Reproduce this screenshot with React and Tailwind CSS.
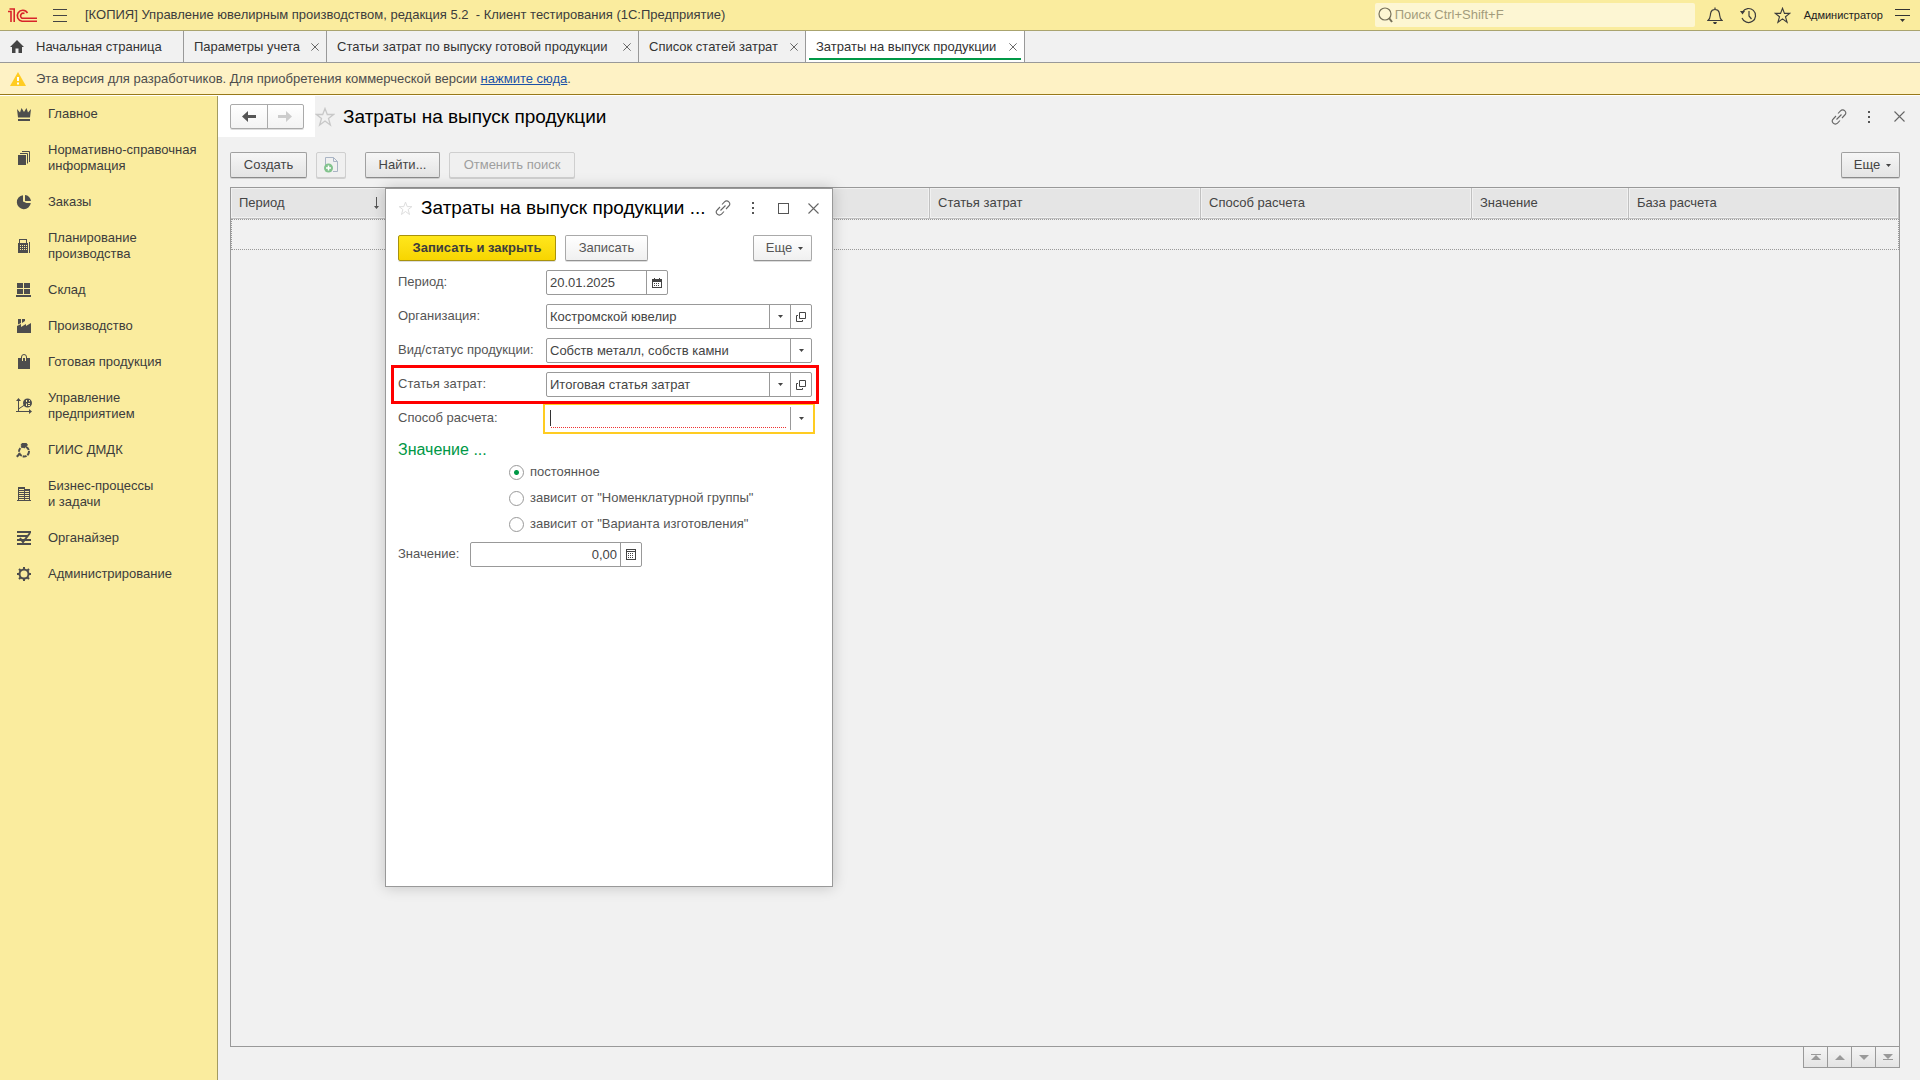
import { useState } from 'react';

const NAV_ITEMS = [
  { icon: 'crown', lines: ['Главное'] },
  { icon: 'books', lines: ['Нормативно-справочная', 'информация'] },
  { icon: 'pie', lines: ['Заказы'] },
  { icon: 'calc', lines: ['Планирование', 'производства'] },
  { icon: 'pallet', lines: ['Склад'] },
  { icon: 'factory', lines: ['Производство'] },
  { icon: 'bag', lines: ['Готовая продукция'] },
  { icon: 'chart', lines: ['Управление', 'предприятием'] },
  { icon: 'ring', lines: ['ГИИС ДМДК'] },
  { icon: 'building', lines: ['Бизнес-процессы', 'и задачи'] },
  { icon: 'organizer', lines: ['Органайзер'] },
  { icon: 'gear', lines: ['Администрирование'] },
];

const TABS = [
  { title: 'Параметры учета', width: 'w-[143px]' },
  { title: 'Статьи затрат по выпуску готовой продукции', width: 'w-[312px]' },
  { title: 'Список статей затрат', width: 'w-[167px]' },
  { title: 'Затраты на выпуск продукции', width: 'w-[219px]', active: true },
];

const RADIOS = [
  { value: 'const', label: 'постоянное' },
  { value: 'group', label: 'зависит от "Номенклатурной группы"' },
  { value: 'variant', label: 'зависит от "Варианта изготовления"' },
];

function NavIcon({ name }) {
  return (
    <svg width="16" height="16" viewBox="0 0 16 16" fill="#4d4d4d" className="shrink-0">
      {name === 'crown' && (
        <>
          <path d="M1 3l3 3.500L5.500 2 8 6l2.500-4L12 6.500 15 3l-1 8.500H2z" />
          <path d="M2 13h12v2H2z" />
        </>
      )}
      {name === 'books' && (
        <>
          <path d="M2 5h8v10H2z" />
          <path d="M4 3.500h7.500v10M6 1.500h7.500v10.500" fill="none" stroke="#4d4d4d" />
        </>
      )}
      {name === 'pie' && (
        <>
          <path d="M7 1.200A7 7 0 1 0 14.800 9L10.500 9 7 7.500z" />
          <path d="M9 1a6.500 6.500 0 0 1 6 6H9z" />
        </>
      )}
      {name === 'calc' && (
        <>
          <path fillRule="evenodd" d="M3 1h8v4h1v10H2V5h1zM4 2v3h6V2zM4 7v1h1V7zm2 0v1h1V7zm2 0v1h1V7zM4 9v1h1V9zm2 0v1h1V9zm2 0v1h1V9zm-4 2v1h1v-1zm2 0v1h1v-1zm2 0v1h1v-1zm2-4v1h1V7zm0 2v1h1V9zm0 2v1h1v-1z" />
          <path d="M13 4h1v11h-1z" />
        </>
      )}
      {name === 'pallet' && (
        <path d="M1 1h6v5H1zM8 1h6v5H8zM1 7h6v5H1zM8 7h6v5H8zM0 13h15v2H0z" />
      )}
      {name === 'factory' && (
        <>
          <path d="M1 15V8l4-2v3l5-3v2l5-3v10z" />
          <path d="M2 1h3v4L2 6.500zM6 1h3v2L6 5z" />
        </>
      )}
      {name === 'bag' && (
        <>
          <path d="M2 4h12v11H2z" />
          <path d="M5.500 7V4" stroke="#faec9e" strokeWidth="1" transform="translate(1 0)" />
          <path d="M10.500 7V4" stroke="#faec9e" strokeWidth="1" transform="translate(-1 0)" />
          <path d="M5.500 6V3a2.500 2.500 0 0 1 5 0v3" fill="none" stroke="#4d4d4d" />
        </>
      )}
      {name === 'chart' && (
        <>
          <path d="M2.500 2v11.500H14M2.500 11l6-4" fill="none" stroke="#4d4d4d" />
          <path d="M2.500 0L5 3H0zM16 13.500L13 11v5zM0 13h3v1H0z" />
          <path fillRule="evenodd" d="M11.500.5a4.500 4.500 0 1 1 0 9 4.500 4.500 0 0 1 0-9zM10 2v2h1V2zm3 0v1.500h1V2zm-3 3.500V8h1V5.500zm2-.5v1h2V5zm0 2v1h2V7z" />
        </>
      )}
      {name === 'ring' && (
        <>
          <circle cx="8" cy="9.500" r="5" fill="none" stroke="#4d4d4d" strokeWidth="2" strokeDasharray="4 1" />
          <path d="M6 1h4.500L12 3 8.200 6.500 4.500 3zM0 14l3-3 1.500 1.500-3 3z" />
        </>
      )}
      {name === 'building' && (
        <path fillRule="evenodd" d="M2 1h7v2h5v11h1v1H1v-1h1zm1 2v1h5V3zm0 2v1h5V5zm0 2v1h5V7zm0 2v1h5V9zm0 2v1h5v-1zm0 2v1h5v-1zm6-8v1h4V5zm0 2v1h4V7zm0 2v1h4V9zm0 2v1h4v-1zm0 2v1h4v-1z" />
      )}
      {name === 'organizer' && (
        <>
          <path d="M1 1h14v2H1zM1 5h10v2H1zM1 9h14v2H1zM1 13h14v2H1z" />
          <path d="M4 8l3 4 7-9" fill="none" stroke="#4d4d4d" strokeWidth="2" />
        </>
      )}
      {name === 'gear' && (
        <>
          <circle cx="8" cy="8" r="4.500" fill="none" stroke="#4d4d4d" strokeWidth="2" />
          <path
            d="M8 1v3M8 12v3M1 8h3M12 8h3M3 3l2 2M11 11l2 2M13 3l-2 2M5 11l-2 2"
            stroke="#4d4d4d"
            strokeWidth="2"
          />
        </>
      )}
    </svg>
  );
}

function StarIcon({ size = 18, color = '#c8c8c8' }) {
  return (
    <svg width={size} height={size} viewBox="0 0 20 20" fill="none" stroke={color} strokeWidth="1.300">
      <path d="M10 1.500l2.300 6h6.200l-5 3.900 1.900 6.600-5.400-4-5.400 4 1.900-6.600-5-3.900h6.200z" />
    </svg>
  );
}

function LinkIcon() {
  return (
    <svg width="16" height="16" viewBox="0 0 16 16" fill="none" stroke="#666" strokeWidth="1.100">
      <path d="M7 4.500l2.500-2.700a3 3 0 0 1 4.300 0 3 3 0 0 1 0 4.200L11 9M9 11.500l-2.500 2.700a3 3 0 0 1-4.300 0 3 3 0 0 1 0-4.200L5 7M5.500 10.500l5-5" />
    </svg>
  );
}

function DotsIcon() {
  return (
    <svg width="4" height="12" viewBox="0 0 4 12" fill="#555">
      <path d="M1 0h2v2H1zM1 5h2v2H1zM1 10h2v2H1z" />
    </svg>
  );
}

function CloseIcon({ size = 11, color = '#666' }) {
  return (
    <svg width={size} height={size} viewBox="0 0 11 11" fill="none" stroke={color} strokeWidth="1.100">
      <path d="M.5.5l10 10M10.500.5l-10 10" />
    </svg>
  );
}

function Caret() {
  return (
    <svg width="5" height="3" viewBox="0 0 5 3" fill="#444" className="shrink-0">
      <path d="M0 0h5L2.500 3z" />
    </svg>
  );
}

function OpenIcon() {
  return (
    <svg width="10" height="10" viewBox="0 0 10 10" fill="none" stroke="#444">
      <path d="M3.500.5h6v6h-6zM2 3.500H.5v6h6V8" />
    </svg>
  );
}

function ToolIcon({ label, children }) {
  return (
    <button type="button" aria-label={label} className="flex h-6 w-[30px] items-center justify-center">
      {children}
    </button>
  );
}

function Button({ children, tone = 'gray', disabled, className = '', ...rest }) {
  const tones = {
    gray: 'border-[#a0a0a0] border-b-[#8a8a8a] bg-linear-to-b from-[#f6f6f6] to-[#e4e4e4] text-[#444]',
    white: 'border-[#a9a9a9] border-b-[#939393] bg-linear-to-b from-white to-[#f0f0f0] text-[#555]',
    yellow: 'border-[#a8920c] bg-linear-to-b from-[#ffe71b] to-[#f7d500] font-bold text-[#3c3c3c]',
    off: 'border-[#cfcfcf] bg-[#f0f0f0] text-[#9e9e9e]',
  };
  return (
    <button
      type="button"
      disabled={disabled}
      className={`flex h-[26px] items-center justify-center rounded-xs border shadow-[0_1px_0_#0002] ${disabled ? tones.off : tones[tone]} ${className}`}
      {...rest}
    >
      {children}
    </button>
  );
}

function TopBar() {
  return (
    <header className="flex h-[31px] items-center border-b border-[#aaa46f] bg-[#faec9e] pr-2.5 pl-2">
      <svg width="29" height="16" viewBox="0 0 29 16" fill="none" stroke="#d8232a" strokeWidth="1.600">
        <path d="M0 4.500h3v10.500M1.500 2h4.700v13" />
        <path d="M19.500 6a5.500 5.500 0 1 0-5.500 8.200h15M16.500 6.500a2.600 2.600 0 1 0-2.500 4.700h15" />
      </svg>
      <button type="button" aria-label="Меню" className="ml-4 flex h-6 w-3.5 items-center">
        <svg width="14" height="13" viewBox="0 0 14 13" stroke="#444">
          <path d="M0 .5h14M0 6.500h14M0 12.500h14" />
        </svg>
      </button>
      <h1 className="ml-[18px] text-[13px] whitespace-pre text-[#3c3c3c]">
        [КОПИЯ] Управление ювелирным производством, редакция 5.2{'  '}- Клиент тестирования (1С:Предприятие)
      </h1>
      <label className="ml-auto flex h-6 w-80 items-center gap-0.5 rounded-xs bg-[#fdf6d3] pl-[3px]">
        <svg width="15" height="16" viewBox="0 0 15 16" fill="none" stroke="#77715a" strokeWidth="1.200">
          <circle cx="7" cy="7" r="6" />
          <path d="M11 11l3 4" strokeWidth="2" />
        </svg>
        <input
          type="search"
          aria-label="Поиск"
          placeholder="Поиск Ctrl+Shift+F"
          className="min-w-0 flex-1 bg-transparent text-[13px] outline-none placeholder:text-[#a39c7c]"
        />
      </label>
      <div className="ml-[3px] flex items-center">
        <button type="button" aria-label="Уведомления" className="flex w-[34px] justify-center">
          <svg width="16" height="17" viewBox="0 0 16 17" fill="none" stroke="#3c3c3c" strokeWidth="1.200">
            <path d="M1 13.500C4 11 3 8 3.800 5.500 4.300 3.500 6 2.500 8 2.500s3.700 1 4.200 3c.8 2.500-.2 5.500 2.800 8zM8 2.500V.5" />
            <path d="M6 15h4l-1 2H7z" fill="#3c3c3c" stroke="none" />
          </svg>
        </button>
        <button type="button" aria-label="История" className="flex w-[34px] justify-center">
          <svg width="17" height="17" viewBox="0 0 17 17" fill="none" stroke="#3c3c3c" strokeWidth="1.200">
            <path d="M2.500 5a7 7 0 1 1-.5 6M9 4v5l2.500 3" />
            <path d="M0 4h5L2.500 7.500z" fill="#3c3c3c" stroke="none" />
          </svg>
        </button>
        <button type="button" aria-label="Избранное" className="flex w-[34px] justify-center">
          <StarIcon size={17} color="#3c3c3c" />
        </button>
      </div>
      <a href="#user" className="ml-1 text-[11px] text-[#222]">
        Администратор
      </a>
      <button type="button" aria-label="Настройки" className="ml-3">
        <svg width="15" height="13" viewBox="0 0 15 13" stroke="#333" fill="#333">
          <path d="M0 .5h15M0 6.500h15" />
          <path d="M5 10h5l-2.500 3z" stroke="none" />
        </svg>
      </button>
    </header>
  );
}

function TabBar() {
  return (
    <nav className="flex h-8 border-b border-[#999] bg-[#f1f1f1] text-[#333]">
      <a href="#home" className="flex w-[184px] items-center gap-3 border-r border-[#999] pl-2.5">
        <svg width="14" height="13" viewBox="0 0 14 13" fill="#444">
          <path d="M7 0l7 7h-2v6H8.500V8.500h-3V13H2V7H0z" />
        </svg>
        Начальная страница
      </a>
      {TABS.map((tab) => (
        <div
          key={tab.title}
          className={`flex border-r border-[#999] px-[3px] pb-0.5 ${tab.width} ${tab.active ? 'bg-white' : ''}`}
        >
          <div
            className={`flex flex-1 items-center justify-between border-b-2 pt-1 pr-1 pl-[7px] ${tab.active ? 'border-[#009846]' : 'border-transparent'}`}
          >
            <a href="#tab">{tab.title}</a>
            <button type="button" aria-label="Закрыть вкладку">
              <CloseIcon size={8} color="#444" />
            </button>
          </div>
        </div>
      ))}
    </nav>
  );
}

function Notice() {
  return (
    <div className="flex h-8 items-center gap-2.5 border-b border-[#98791a] bg-[#fef2c5] pl-2.5 text-[#4d4d4d]">
      <svg width="16" height="14" viewBox="0 0 16 14">
        <path d="M8 0l8 14H0z" fill="#fc2" />
        <path d="M7 5h2v4H7zM7 10.500h2v2H7z" fill="#fff" />
      </svg>
      <p>
        Эта версия для разработчиков. Для приобретения коммерческой версии{' '}
        <a href="#buy" className="text-[#1a51a8] underline">
          нажмите сюда
        </a>
        .
      </p>
    </div>
  );
}

function Sidebar() {
  return (
    <aside className="w-[218px] shrink-0 border-r border-[#a39b60] bg-[#faec9e]">
      <ul>
        {NAV_ITEMS.map((item) => (
          <li key={item.icon}>
            <a href={`#${item.icon}`} className="flex items-center gap-4 py-2.5 pl-4 leading-4 text-[#3c3c3c]">
              <NavIcon name={item.icon} />
              <span>
                {item.lines.map((line) => (
                  <span key={line} className="block">
                    {line}
                  </span>
                ))}
              </span>
            </a>
          </li>
        ))}
      </ul>
    </aside>
  );
}

function FieldButton({ label, children }) {
  return (
    <button
      type="button"
      aria-label={label}
      className="flex w-[21px] shrink-0 items-center justify-center border-l border-[#999]"
    >
      {children}
    </button>
  );
}

function Row({ id, label, highlight, children }) {
  return (
    <div className="relative flex h-[25px]">
      {highlight && (
        <span className="pointer-events-none absolute -inset-[7px] z-10 border-3 border-[#ff0000]" />
      )}
      <label htmlFor={id} className="w-[148px] shrink-0 pt-1 whitespace-nowrap">
        {label}
      </label>
      {children}
    </div>
  );
}

const FIELD = 'flex h-[25px] rounded-xs border border-[#999] bg-white text-[#444]';
const INPUT = 'min-w-0 flex-1 bg-transparent px-[3px] outline-none';

function CostDialog() {
  const [mode, setMode] = useState('const');
  const [kind, setKind] = useState('own');

  return (
    <section
      role="dialog"
      aria-label="Затраты на выпуск продукции"
      className="absolute top-[92px] left-[167px] h-[699px] w-[448px] border border-[#999] bg-white px-3 text-[#555] shadow-[0_0_14px_#0003]"
    >
      <div className="flex h-[38px] items-center">
        <StarIcon size={15} color="#dcdcdc" />
        <h2 className="ml-2 flex-1 text-[19px] whitespace-nowrap text-black">Затраты на выпуск продукции ...</h2>
        <div className="-mr-2 -ml-2 flex items-center">
          <ToolIcon label="Ссылка">
            <LinkIcon />
          </ToolIcon>
          <ToolIcon label="Еще действия">
            <DotsIcon />
          </ToolIcon>
          <ToolIcon label="Развернуть">
            <span className="size-[11px] border border-[#555]" />
          </ToolIcon>
          <ToolIcon label="Закрыть">
            <CloseIcon />
          </ToolIcon>
        </div>
      </div>

      <div className="mt-2 flex gap-[9px] pr-2">
        <Button tone="yellow" className="w-[158px]">
          Записать и закрыть
        </Button>
        <Button tone="white" className="w-[83px]">
          Записать
        </Button>
        <Button tone="white" className="ml-auto w-[59px] gap-1.5 pl-1">
          Еще <Caret />
        </Button>
      </div>

      <form className="mt-[9px] pr-2">
        <div className="flex flex-col gap-[9px]">
          <Row id="period" label="Период:">
            <div className={`${FIELD} w-[122px]`}>
              <input id="period" defaultValue="20.01.2025" className={INPUT} />
              <FieldButton label="Выбрать дату">
                <svg width="10" height="10" viewBox="0 0 10 10" fill="#444">
                  <path fillRule="evenodd" d="M0 1h2V0h1v1h4V0h1v1h2v9H0zm1 3v5h8V4z" />
                  <path d="M2 5h1v1H2zM4 5h1v1H4zM6 5h1v1H6zM2 7h1v1H2zM4 7h1v1H4zM6 7h1v1H6z" />
                </svg>
              </FieldButton>
            </div>
          </Row>
          <Row id="org" label="Организация:">
            <div className={`${FIELD} flex-1`}>
              <input id="org" defaultValue="Костромской ювелир" className={INPUT} />
              <FieldButton label="Выбрать">
                <Caret />
              </FieldButton>
              <FieldButton label="Открыть">
                <OpenIcon />
              </FieldButton>
            </div>
          </Row>
          <Row id="kind" label="Вид/статус продукции:">
            <div className={`${FIELD} relative flex-1`}>
              <select
                id="kind"
                value={kind}
                onChange={(e) => setKind(e.target.value)}
                className="w-full appearance-none bg-transparent px-[3px] outline-none"
              >
                <option value="own">Собств металл, собств камни</option>
              </select>
              <span className="pointer-events-none absolute inset-y-0 right-0 flex w-[21px] items-center justify-center border-l border-[#999]">
                <Caret />
              </span>
            </div>
          </Row>
          <Row id="cost" label="Статья затрат:" highlight>
            <div className={`${FIELD} flex-1`}>
              <input id="cost" defaultValue="Итоговая статья затрат" className={INPUT} />
              <FieldButton label="Выбрать">
                <Caret />
              </FieldButton>
              <FieldButton label="Открыть">
                <OpenIcon />
              </FieldButton>
            </div>
          </Row>
          <Row id="method" label="Способ расчета:">
            <div className="relative -mx-[3px] -my-[3px] flex flex-1 border-2 border-[#fc2] bg-white p-0.5">
              <span className="pointer-events-none absolute top-[5px] left-[5px] h-4 w-px bg-[#333]" />
              <div className="flex flex-1 px-1">
                <input
                  id="method"
                  className="mb-0.5 min-w-0 flex-1 border-b border-dotted border-[#e33] bg-transparent caret-transparent outline-none"
                />
              </div>
              <FieldButton label="Выбрать">
                <Caret />
              </FieldButton>
            </div>
          </Row>
        </div>

        <fieldset className="mt-[11px]">
          <legend className="text-[16px] leading-4 text-[#009846]">Значение ...</legend>
          <div className="flex flex-col pt-px pl-[111px]">
            {RADIOS.map((r) => (
              <label key={r.value} className="flex h-[26px] items-center gap-1.5">
                <input
                  type="radio"
                  name="mode"
                  value={r.value}
                  checked={mode === r.value}
                  onChange={() => setMode(r.value)}
                  className="size-[15px] appearance-none rounded-full border border-[#999] bg-white checked:bg-[radial-gradient(circle,#009846_2px,#fff_3px)]"
                />
                {r.label}
              </label>
            ))}
          </div>
        </fieldset>

        <div className="mt-[5px] flex">
          <label htmlFor="value" className="w-[72px] pt-1">
            Значение:
          </label>
          <div className={`${FIELD} w-[172px]`}>
            <input id="value" defaultValue="0,00" className={`${INPUT} text-right`} />
            <FieldButton label="Калькулятор">
              <svg width="10" height="11" viewBox="0 0 10 11" fill="#444">
                <path fillRule="evenodd" d="M0 0h10v11H0zm1 1v1h8V1zm0 2v7h8V3z" />
                <path d="M2 4h1v1H2zM4 4h1v1H4zM6 4h1v1H6zM2 6h1v1H2zM4 6h1v1H4zM6 6h1v1H6zM2 8h1v1H2zM4 8h1v1H4zM6 8h1v1H6z" />
              </svg>
            </FieldButton>
          </div>
        </div>
      </form>
    </section>
  );
}

function CostTable() {
  const head = 'border-r border-b border-[#c0c0c0] pl-2 text-left font-normal shadow-[inset_0_0_0_1px_#f1f1f1]';
  return (
    <div className="flex flex-1 flex-col border border-[#999]">
      <table className="w-full table-fixed border-separate border-spacing-0">
        <colgroup>
          <col className="w-[156px]" />
          <col className="w-[543px]" />
          <col className="w-[271px]" />
          <col className="w-[271px]" />
          <col className="w-[157px]" />
          <col />
        </colgroup>
        <thead className="bg-[#e5e5e5] text-[#444]">
          <tr className="h-[31px]">
            <th className={head}>
              <span className="flex items-center justify-between pr-[7px]">
                Период
                <svg width="5" height="12" viewBox="0 0 5 12" fill="#555">
                  <path d="M2 0h1v9h2l-2.500 3L0 9h2z" />
                </svg>
              </span>
            </th>
            <th className={head} aria-label="Продукция" />
            <th className={head}>Статья затрат</th>
            <th className={head}>Способ расчета</th>
            <th className={head}>Значение</th>
            <th className={head}>База расчета</th>
          </tr>
        </thead>
        <tbody>
          <tr className="h-[31px]">
            <td colSpan={6} className="border border-dotted border-[#999]" />
          </tr>
        </tbody>
      </table>
    </div>
  );
}

function Pager() {
  const buttons = [
    { label: 'В начало', d: 'M0 0h10v1H0zM5 1l5 5H0z' },
    { label: 'Вверх', d: 'M5 1l5 5H0z' },
    { label: 'Вниз', d: 'M0 1h10L5 6z' },
    { label: 'В конец', d: 'M0 0h10L5 5zM0 5h10v1H0z' },
  ];
  return (
    <div className="flex justify-end">
      <div className="-mt-px flex border-l border-[#999]">
        {buttons.map((b) => (
          <button
            key={b.label}
            type="button"
            aria-label={b.label}
            className="flex h-[22px] w-6 items-center justify-center border border-l-0 border-[#999] bg-linear-to-b from-[#f4f4f4] to-[#e4e4e4]"
          >
            <svg width="10" height="6" viewBox="0 0 10 6" fill="#999">
              <path d={b.d} />
            </svg>
          </button>
        ))}
      </div>
    </div>
  );
}

function App() {
  return (
    <div className="flex min-h-screen flex-col bg-[#f1f1f1] font-['Liberation_Sans',Arial,sans-serif] text-[13px] leading-4">
      <TopBar />
      <TabBar />
      <Notice />
      <div className="flex flex-1 border-t border-white">
        <Sidebar />
        <main className="relative flex flex-1 flex-col pr-5 pb-3">
          <div className="flex h-[41px] items-center">
            <div className="flex h-full w-[97px] items-center bg-white pl-3">
              <div className="flex h-[25px] w-[74px] rounded-xs border border-[#aaa] bg-linear-to-b from-white to-[#f3f3f3] shadow-[0_1px_0_#0002]">
                <button
                  type="button"
                  aria-label="Назад"
                  className="flex flex-1 items-center justify-center border-r border-[#aaa]"
                >
                  <svg width="14" height="11" viewBox="0 0 14 11" fill="#555">
                    <path d="M0 5.500L6 0v4h8v3H6v4z" />
                  </svg>
                </button>
                <button type="button" aria-label="Вперед" className="flex flex-1 items-center justify-center">
                  <svg width="14" height="11" viewBox="0 0 14 11" fill="#ccc">
                    <path d="M14 5.500L8 0v4H0v3h8v4z" />
                  </svg>
                </button>
              </div>
            </div>
            <StarIcon size={20} />
            <h2 className="ml-2 flex-1 text-[19px] text-black">Затраты на выпуск продукции</h2>
            <div className="-mr-3.5 flex items-center">
              <ToolIcon label="Ссылка">
                <LinkIcon />
              </ToolIcon>
              <ToolIcon label="Еще действия">
                <DotsIcon />
              </ToolIcon>
              <ToolIcon label="Закрыть">
                <CloseIcon />
              </ToolIcon>
            </div>
          </div>

          <div className="flex flex-1 flex-col pl-3">
            <div className="mt-[15px] mb-[9px] flex">
              <Button className="w-[77px]">Создать</Button>
              <Button disabled aria-label="Скопировать" className="ml-[9px] w-[30px]">
                <svg width="14" height="16" viewBox="0 0 14 16" fill="none">
                  <path d="M1.500 9V.5h8l4 4v10H9M9.500.5v4h4" stroke="#a9b4c4" />
                  <circle cx="4.500" cy="11" r="4.500" fill="#82c38d" />
                  <path d="M4.500 8.500v5M2 11h5" stroke="#fff" strokeWidth="1.500" />
                </svg>
              </Button>
              <Button className="ml-[19px] w-[75px]">Найти...</Button>
              <Button disabled className="ml-[9px] w-[126px]">
                Отменить поиск
              </Button>
              <Button className="ml-auto w-[59px] gap-1.5 pl-1">
                Еще <Caret />
              </Button>
            </div>
            <CostTable />
            <Pager />
          </div>
          <CostDialog />
        </main>
      </div>
    </div>
  );
}

export default App;
